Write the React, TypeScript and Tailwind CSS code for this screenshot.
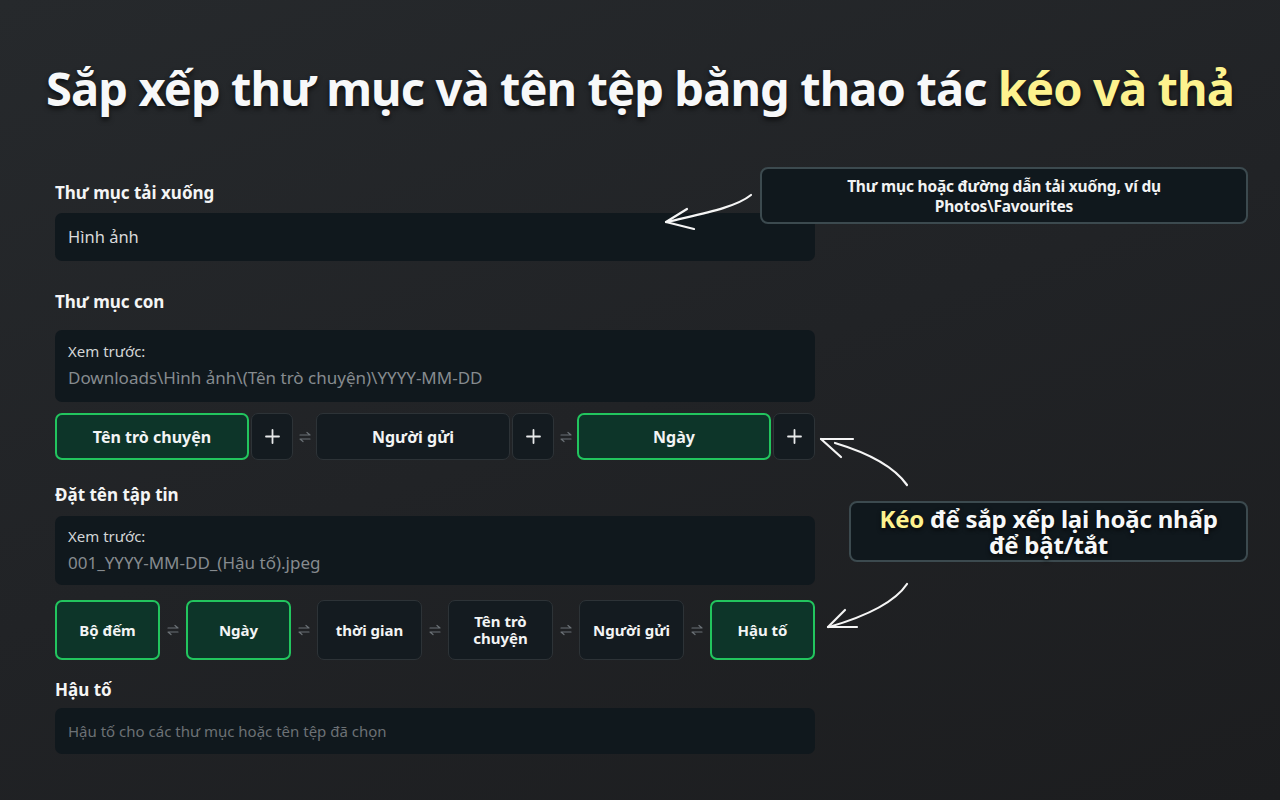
import React from "react";

const font = { fontFamily: '"Noto Sans", "Open Sans", "DejaVu Sans", sans-serif' };

function Swap() {
  return (
    <div className="flex w-full items-center justify-center">
      <svg width="12" height="12" viewBox="0 0 12 12" fill="none" stroke="#6b7176" strokeWidth="1.2" strokeLinecap="round" strokeLinejoin="round">
        <path d="M1 4h10L8 1.5" />
        <path d="M11 8H1l3 2.5" />
      </svg>
    </div>
  );
}

function Chip({ label, on, className = "" }: { label: React.ReactNode; on?: boolean; className?: string }) {
  return (
    <div
      className={
        "flex items-center justify-center rounded-[7px] text-center font-bold text-[#f3f4f4] " +
        (on ? "border-2 border-[#22c55e] bg-[#0d3529] " : "border border-[#2d3337] bg-[#141b20] ") +
        className
      }
    >
      {label}
    </div>
  );
}

function Plus() {
  return (
    <div className="flex h-full w-[42px] shrink-0 items-center justify-center rounded-[7px] border border-[#2d3337] bg-[#141b20]">
      <svg width="15" height="15" viewBox="0 0 15 15" stroke="#e8e9ea" strokeWidth="1.8" strokeLinecap="round">
        <path d="M7.5 1v13M1 7.5h13" />
      </svg>
    </div>
  );
}

export default function App() {
  return (
    <div
      className="relative h-[800px] w-[1280px] overflow-hidden bg-[linear-gradient(160deg,#26292c_0%,#212326_50%,#1c1d1f_100%)]"
      style={font}
    >
      <h1 className="pt-[58px] text-center text-[47px] font-bold leading-[60px] tracking-[-0.9px] text-[#f7f8f9] [text-shadow:0_3px_5px_rgba(0,0,0,0.65)]">
        Sắp xếp thư mục và tên tệp bằng thao tác <span className="text-[#fdf28e]">kéo và thả</span>
      </h1>

      <div className="ml-[55px] mt-[63px] flex w-[760px] flex-col">
        <div className="h-6 text-[17px] font-bold leading-6 text-[#f4f5f5]">Thư mục tải xuống</div>
        <div className="mt-[8px] flex h-[48px] items-center rounded-[7px] bg-[#10181d] px-[13px] text-[16.5px] text-[#d9dadb]">
          Hình ảnh
        </div>

        <div className="mt-[29px] h-6 text-[17px] font-bold leading-6 text-[#f4f5f5]">Thư mục con</div>
        <div className="mt-[16px] flex h-[72px] flex-col rounded-[7px] bg-[#10181d] px-[13px] pt-[10px]">
          <div className="text-[15px] leading-[22px] text-[#d3d5d6]">Xem trước:</div>
          <div className="mt-[4px] text-[17px] leading-[24px] text-[#868b8f]">Downloads\Hình ảnh\(Tên trò chuyện)\YYYY-MM-DD</div>
        </div>

        <div className="mt-[11px] flex h-[47px] items-stretch">
          <div className="flex gap-[2px]">
            <Chip on label="Tên trò chuyện" className="w-[194px] text-[16px]" />
            <Plus />
          </div>
          <div className="flex w-[23px] items-center"><Swap /></div>
          <div className="flex gap-[2px]">
            <Chip label="Người gửi" className="w-[194px] text-[16px]" />
            <Plus />
          </div>
          <div className="flex w-[23px] items-center"><Swap /></div>
          <div className="flex gap-[2px]">
            <Chip on label="Ngày" className="w-[194px] text-[16px]" />
            <Plus />
          </div>
        </div>

        <div className="mt-[23px] h-6 text-[17px] font-bold leading-6 text-[#f4f5f5]">Đặt tên tập tin</div>
        <div className="mt-[9px] flex h-[69px] flex-col rounded-[7px] bg-[#10181d] px-[13px] pt-[9px]">
          <div className="text-[15px] leading-[22px] text-[#d3d5d6]">Xem trước:</div>
          <div className="mt-[4px] text-[17px] leading-[24px] text-[#868b8f]">001_YYYY-MM-DD_(Hậu tố).jpeg</div>
        </div>

        <div className="mt-[15px] flex h-[60px] items-stretch">
          <Chip on label="Bộ đếm" className="w-[105px] text-[15px]" />
          <div className="flex w-[26px] items-center"><Swap /></div>
          <Chip on label="Ngày" className="w-[105px] text-[15px]" />
          <div className="flex w-[26px] items-center"><Swap /></div>
          <Chip label="thời gian" className="w-[105px] text-[15px]" />
          <div className="flex w-[26px] items-center"><Swap /></div>
          <Chip label={<span className="leading-[17px]">Tên trò<br />chuyện</span>} className="w-[105px] text-[15px]" />
          <div className="flex w-[26px] items-center"><Swap /></div>
          <Chip label="Người gửi" className="w-[105px] text-[15px]" />
          <div className="flex w-[26px] items-center"><Swap /></div>
          <Chip on label="Hậu tố" className="w-[105px] text-[15px]" />
        </div>

        <div className="mt-[18px] h-6 text-[17px] font-bold leading-6 text-[#f4f5f5]">Hậu tố</div>
        <div className="mt-[6px] flex h-[46px] items-center rounded-[7px] bg-[#10181d] px-[13px] text-[15px] text-[#6c7175]">
          Hậu tố cho các thư mục hoặc tên tệp đã chọn
        </div>
      </div>

      {/* callout 1 */}
      <div className="absolute left-[760px] top-[167px] flex h-[57px] w-[488px] items-center justify-center rounded-[8px] border-2 border-[#3c4a4f] bg-[#10181d] text-center text-[15.5px] font-bold leading-[20px] tracking-[-0.2px] text-[#f2f3f3]">
        <div>
          Thư mục hoặc đường dẫn tải xuống, ví dụ
          <br />
          Photos\Favourites
        </div>
      </div>

      {/* callout 2 */}
      <div className="absolute left-[849px] top-[501px] flex h-[61px] w-[399px] items-center justify-center rounded-[8px] border-2 border-[#3c4a4f] bg-[#10181d] text-center text-[24px] font-bold leading-[26px] tracking-[-0.2px] text-[#f7f8f8] [text-shadow:0_2px_4px_rgba(0,0,0,0.7)]">
        <div>
          <span className="text-[#fdf28e]">Kéo</span> để sắp xếp lại hoặc nhấp
          <br />
          để bật/tắt
        </div>
      </div>

      {/* arrows */}
      <svg className="pointer-events-none absolute left-0 top-0" width="1280" height="800" fill="none" stroke="#f5f5f5" strokeWidth="2.2" strokeLinecap="round" strokeLinejoin="round">
        <path d="M751 195 C735 208 700 214 667 222" />
        <path d="M666 222 L687 209" />
        <path d="M666 222 L694 229" />

        <path d="M907 485 C893 465 865 452 835 443" />
        <path d="M821 439 L853 439" />
        <path d="M821 439 L841 457" />

        <path d="M907 584 C893 605 860 618 829 627" />
        <path d="M828 627 L857 627" />
        <path d="M828 627 L845 610" />
      </svg>
    </div>
  );
}
